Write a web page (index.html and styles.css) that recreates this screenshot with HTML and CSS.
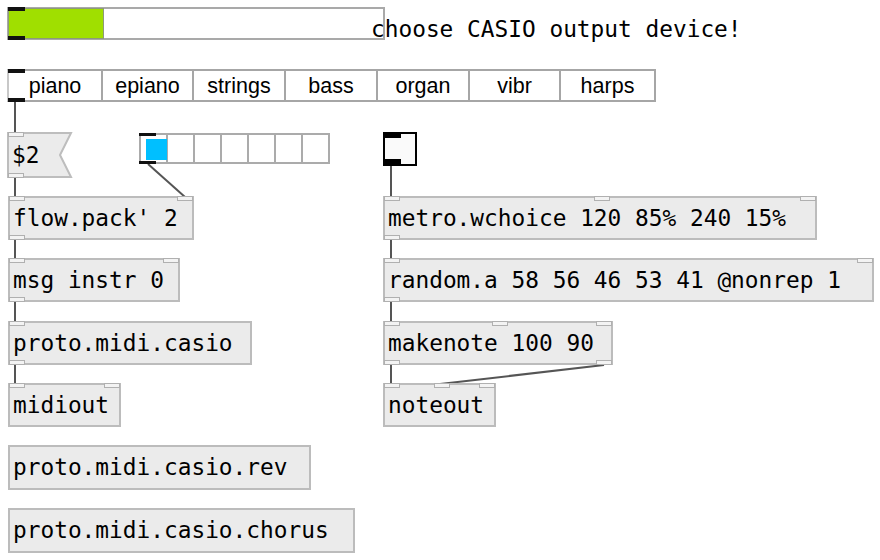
FILE: index.html
```html
<!DOCTYPE html>
<html>
<head>
<meta charset="utf-8">
<link rel="stylesheet" href="styles.css">
</head>
<body>
<div class="canvas">
  <svg class="wires" width="880" height="560" viewBox="0 0 880 560">
    <g stroke="#555" stroke-width="2" fill="none">
      <line x1="15" y1="102" x2="15" y2="133"/>
      <line x1="15" y1="177" x2="15" y2="196"/>
      <line x1="15" y1="240" x2="15" y2="258"/>
      <line x1="15" y1="302" x2="15" y2="321"/>
      <line x1="15" y1="365" x2="15" y2="383"/>
      <line x1="148" y1="164" x2="185" y2="197"/>
      <line x1="391" y1="165" x2="391" y2="196"/>
      <line x1="391" y1="239" x2="391" y2="258"/>
      <line x1="391" y1="302" x2="391" y2="321"/>
      <line x1="391" y1="365" x2="391" y2="383"/>
      <line x1="604" y1="365" x2="440" y2="384"/>
    </g>
  </svg>

  <div class="hslider">
    <div class="hs-fill"></div>
    <span class="mark mark-top"></span>
    <span class="mark mark-bot"></span>
  </div>
  <div class="comment">choose CASIO output device!</div>

  <div class="tabs">
    <div class="tab t1">piano</div>
    <div class="tab t2">epiano</div>
    <div class="tab t3">strings</div>
    <div class="tab t4">bass</div>
    <div class="tab t5">organ</div>
    <div class="tab t6">vibr</div>
    <div class="tab t7">harps</div>
    <span class="mark mark-top"></span>
    <span class="mark mark-bot"></span>
  </div>

  <div class="msg">
    <svg class="msg-shape" width="66" height="46" viewBox="0 0 66 46">
      <polygon points="1,1 64,1 53,23 64,45 1,45" fill="#ebebeb" stroke="#bdbdbd" stroke-width="2"/>
    </svg>
    <span class="msg-text">$2</span>
    <span class="io in-l"></span>
    <span class="io out-l"></span>
  </div>

  <div class="hradio">
    <div class="cell"><span class="dot"></span></div>
    <div class="cell"></div>
    <div class="cell"></div>
    <div class="cell"></div>
    <div class="cell"></div>
    <div class="cell"></div>
    <div class="cell"></div>
    <span class="mark mark-top"></span>
    <span class="mark mark-bot"></span>
  </div>

  <div class="toggle">
    <span class="tmark tmark-top"></span>
    <span class="tmark tmark-bot"></span>
  </div>

  <div class="obj o-flowpack">flow.pack' 2<span class="io in-l"></span><span class="io in-r"></span><span class="io out-l"></span></div>
  <div class="obj o-msginstr">msg instr 0<span class="io in-l"></span><span class="io in-r"></span><span class="io out-l"></span></div>
  <div class="obj o-casio">proto.midi.casio<span class="io in-l"></span><span class="io out-l"></span></div>
  <div class="obj o-midiout">midiout<span class="io in-l"></span><span class="io in-r"></span></div>
  <div class="obj o-rev">proto.midi.casio.rev</div>
  <div class="obj o-chorus">proto.midi.casio.chorus</div>

  <div class="obj o-metro">metro.wchoice 120 85% 240 15%<span class="io in-l"></span><span class="io in-m"></span><span class="io in-r"></span><span class="io out-l"></span></div>
  <div class="obj o-random">random.a 58 56 46 53 41 @nonrep 1<span class="io in-l"></span><span class="io in-r"></span><span class="io out-l"></span></div>
  <div class="obj o-makenote">makenote 100 90<span class="io in-l"></span><span class="io in-m"></span><span class="io in-r"></span><span class="io out-l"></span><span class="io out-r"></span></div>
  <div class="obj o-noteout">noteout<span class="io in-l"></span><span class="io in-m2"></span><span class="io in-r"></span></div>
</div>
</body>
</html>
```

FILE: styles.css
```css
html, body {
  margin: 0;
  padding: 0;
  background: #ffffff;
}

.canvas {
  position: relative;
  width: 880px;
  height: 560px;
  overflow: hidden;
  background: #ffffff;
  font-family: "DejaVu Sans Mono", monospace;
  color: #000;
}

.wires {
  position: absolute;
  left: 0;
  top: 0;
}

/* generic black iolet marks for IEM-style GUIs */
.mark {
  position: absolute;
  left: -1px;
  width: 17px;
  height: 4px;
  background: #111;
}
.mark-top { top: -2px; }
.mark-bot { bottom: -2px; }

/* horizontal slider */
.hslider {
  position: absolute;
  left: 7px;
  top: 7px;
  width: 378px;
  height: 33px;
  box-sizing: border-box;
  border: 2px solid #a9a9a9;
  background: #fff;
}
.hs-fill {
  position: absolute;
  left: -1px;
  top: -1px;
  width: 96px;
  height: 31px;
  box-sizing: border-box;
  background: #a0df00;
  border: 1px solid #8c9a7a;
}

.comment {
  position: absolute;
  left: 371px;
  top: 15px;
  font-size: 22.8px;
  line-height: 28px;
  white-space: nowrap;
}

/* tab radio */
.tabs {
  position: absolute;
  left: 7px;
  top: 69px;
  height: 33px;
  box-sizing: border-box;
  border: 2px solid #a6a6a6;
  border-left-color: #c8c8c8;
  display: grid;
  grid-template-columns: 92px 91px 92px 92px 92px 91px 95px;
  font-family: "Liberation Sans", Arial, sans-serif;
  font-size: 21.5px;
}
.tab {
  line-height: 31px;
  height: 29px;
  text-align: center;
  border-left: 2px solid #a6a6a6;
  white-space: nowrap;
}
.tab.t1 { border-left: none; }

/* message box */
.msg {
  position: absolute;
  left: 7px;
  top: 132px;
  width: 66px;
  height: 46px;
}
.msg-shape {
  position: absolute;
  left: 0;
  top: 0;
}
.msg-text {
  position: absolute;
  left: 5px;
  top: 0;
  line-height: 46px;
  font-size: 22.8px;
}

/* iolets of boxes */
.io {
  position: absolute;
  width: 16px;
  height: 5px;
  box-sizing: border-box;
  border: 1px solid #b0b0b0;
  background: #f3f3f3;
}
.in-l { left: -1px; top: -2px; }
.in-r { right: -1px; top: -2px; }
.in-m { left: calc(50% - 8px); top: -2px; }
.in-m2 { left: calc(50% - 8px); top: -2px; }
.out-l { left: -1px; bottom: -2px; }
.out-r { right: -1px; bottom: -2px; }
.msg .in-l { left: 1px; top: 0; }
.msg .out-l { left: 1px; bottom: 0; }

/* horizontal radio */
.hradio {
  position: absolute;
  left: 139px;
  top: 133px;
  display: flex;
  border: 2px solid #ababab;
  border-right: none;
}
.cell {
  width: 25px;
  height: 27px;
  border-right: 2px solid #ababab;
  position: relative;
}
.dot {
  position: absolute;
  left: 5px;
  top: 4px;
  width: 21px;
  height: 21px;
  background: #00bfff;
}
.hradio .mark { height: 3px; left: -2px; }
.hradio .mark-top { top: -2px; }
.hradio .mark-bot { bottom: -2px; }

/* toggle */
.toggle {
  position: absolute;
  left: 383px;
  top: 132px;
  width: 34px;
  height: 34px;
  box-sizing: border-box;
  border: 2px solid #000;
  background: #fafafa;
}
.tmark {
  position: absolute;
  left: -2px;
  width: 18px;
  background: #000;
}
.tmark-top { top: -2px; height: 6px; }
.tmark-bot { bottom: -2px; height: 7px; }

/* object boxes */
.obj {
  position: absolute;
  height: 44px;
  box-sizing: border-box;
  border: 2px solid #bcbcbc;
  background: #ebebeb;
  font-size: 22.8px;
  line-height: 40px;
  padding-left: 3px;
  white-space: nowrap;
}
.o-flowpack { left: 8px; top: 196px; width: 186px; }
.o-msginstr { left: 8px; top: 258px; width: 172px; }
.o-casio { left: 8px; top: 321px; width: 244px; }
.o-midiout { left: 8px; top: 383px; width: 113px; }
.o-rev { left: 8px; top: 445px; width: 303px; height: 45px; }
.o-chorus { left: 8px; top: 508px; width: 347px; height: 45px; }

.o-metro { left: 383px; top: 196px; width: 434px; }
.o-random { left: 383px; top: 258px; width: 491px; }
.o-makenote { left: 383px; top: 321px; width: 230px; }
.o-noteout { left: 383px; top: 383px; width: 113px; }
.o-noteout .in-m2 { left: 49px; }
.o-makenote .in-m { left: 107px; }
.o-metro .in-m { left: 209px; }
```
